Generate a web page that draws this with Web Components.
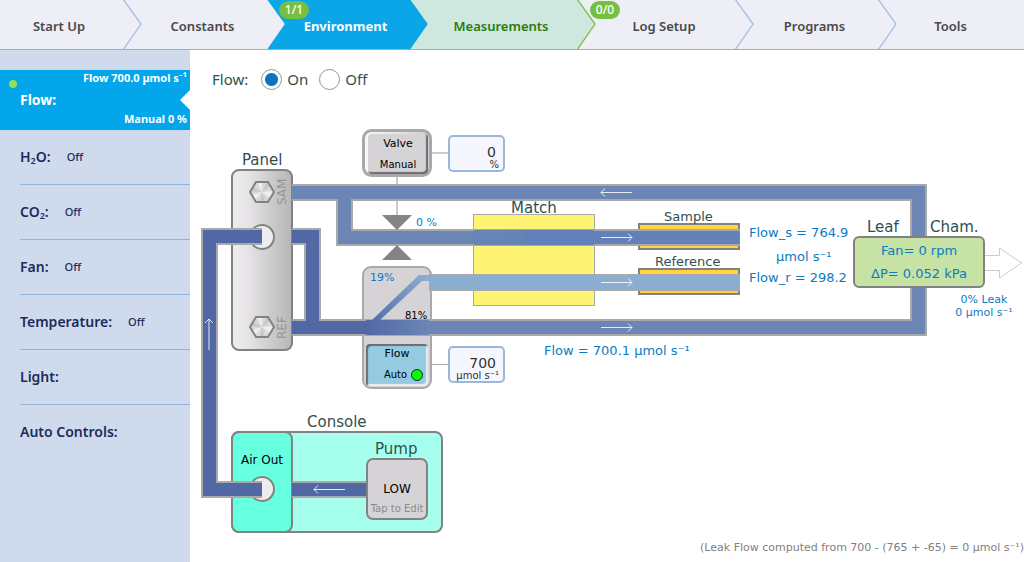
<!DOCTYPE html>
<html lang="en">
<head>
<meta charset="utf-8">
<title>Environment – Flow</title>
<style>
  html, body { margin: 0; min-height: 100%; background: #fff; }
  body { font-family: "Noto Sans", "Open Sans", sans-serif; }
</style>
</head>
<body>
<env-app></env-app>

<template id="t-env-app">
  <style>
    :host { display: flex; flex-direction: column; min-height: 100vh; }
    .body { display: flex; flex: 1; }
    .main { flex: 1; min-width: 0; display: flex; flex-direction: column; }
    .main > p { margin: auto 0 0; font: 11px/28px "DejaVu Sans", sans-serif; color: #808080; text-align: right; white-space: nowrap; }
  </style>
  <nav-bar>
    <nav-tab class="start">Start Up</nav-tab>
    <nav-tab before-active>Constants</nav-tab>
    <nav-tab badge="1/1" state="active">Environment</nav-tab>
    <nav-tab state="running">Measurements</nav-tab>
    <nav-tab badge="0/0">Log Setup</nav-tab>
    <nav-tab>Programs</nav-tab>
    <nav-tab class="end">Tools</nav-tab>
  </nav-bar>
  <div class="body">
    <side-bar>
      <side-active>
        <span slot="top">Flow 700.0 µmol s⁻¹</span>Flow:<span slot="bottom">Manual 0 %</span>
      </side-active>
      <side-item status="Off">H<sub>2</sub>O:</side-item>
      <side-item status="Off">CO<sub>2</sub>:</side-item>
      <side-item status="Off">Fan:</side-item>
      <side-item status="Off">Temperature:</side-item>
      <side-item>Light:</side-item>
      <side-item class="last">Auto Controls:</side-item>
    </side-bar>
    <main class="main">
      <flow-switch></flow-switch>
      <flow-diagram></flow-diagram>
      <p>(Leak Flow computed from 700 - (765 + -65) = 0 µmol s⁻¹)</p>
    </main>
  </div>
</template>

<template id="t-nav-bar">
  <style>
    :host { display: block; background: #eeeef6; border-bottom: 1px solid #93b1d2; }
    nav { display: grid; grid-template-columns: 124fr 143fr 143fr 168fr 158fr 143fr 145fr; height: 49px; overflow: hidden; }
    ::slotted(nav-tab) { --pad-left: 14px; }
    ::slotted(.start) { --pad-left: 0; --pad-right: 6px; }
    ::slotted(.end) { --pad-left: 0; --pad-right: 2px; }
  </style>
  <nav aria-label="Sections"><slot></slot></nav>
</template>

<template id="t-nav-tab">
  <style>
    :host { display: grid; position: relative; --fill: #eeeef6; --edge: #a3c0e2; --ink: #484848; --weight: 600; }
    :host([state="active"]) { --fill: #0aa6e8; --edge: #0aa6e8; --ink: #fff; --weight: 700; }
    :host([state="running"]) { --fill: #cfe8df; --edge: #76bf42; --ink: #2a7a10; }
    :host([before-active]) { --edge: #eeeef6; }
    :host(.end) svg { display: none; }
    button { border: 0; margin: 0; padding: 2px var(--pad-right, 0) 0 var(--pad-left, 0); background: var(--fill); color: var(--ink); font: var(--weight) 13px/20px "Noto Sans", sans-serif; cursor: pointer; }
    svg { position: absolute; left: 100%; top: 0; width: 20px; height: 49px; z-index: 1; overflow: visible; margin-left: -1px; }
    path { fill: var(--fill); stroke: var(--edge); stroke-width: 1.3; }
    .badge { position: absolute; z-index: 2; left: 12px; top: 1px; min-width: 30px; border-radius: 9px; background: #76bf42; color: #fff; font: 500 12px/18px "Noto Sans", sans-serif; text-align: center; }
    .badge:empty { display: none; }
  </style>
  <button type="button"><slot></slot></button>
  <svg aria-hidden="true"><path d="M0 -1L18 24L0 50"/></svg>
  <span class="badge"></span>
</template>

<template id="t-side-bar">
  <style>
    :host { display: block; flex: 0 0 190px; background: #cfdbed; }
    nav { padding-top: 20px; }
    ::slotted(.last) { --line: transparent; }
  </style>
  <nav aria-label="Controls"><slot></slot></nav>
</template>

<template id="t-side-active">
  <style>
    :host { display: block; position: relative; }
    button { display: grid; grid-template-rows: 16px 1fr 20px; width: 100%; height: 60px; border: 0; padding: 0 3px 0 20px; background: #03a6ea; color: #fff; font: 700 14px/20px "Noto Sans", sans-serif; text-align: left; }
    .main { align-self: center; padding-top: 4px; }
    .note { font-size: 11px; line-height: 16px; text-align: right; }
    .note:last-child { line-height: 18px; }
    i { position: absolute; left: 9px; top: 10px; width: 8px; height: 8px; border-radius: 50%; background: #92e052; }
    svg { position: absolute; right: 0; top: 20px; }
  </style>
  <button type="button" aria-current="true">
    <span class="note"><slot name="top"></slot></span>
    <span class="main"><slot></slot></span>
    <span class="note"><slot name="bottom"></slot></span>
  </button>
  <i></i>
  <svg width="10" height="20" aria-hidden="true"><path d="M10 0L0 10L10 20Z" fill="#fff"/></svg>
</template>

<template id="t-side-item">
  <style>
    :host { display: block; margin-left: 20px; border-bottom: 1px solid var(--line, #93b3d8); }
    button { display: flex; align-items: center; gap: 16px; width: 100%; height: 54px; border: 0; padding: 0; background: none; color: #1b2c5c; font: 600 14px/20px "Noto Sans", sans-serif; text-align: left; }
    .status { font-size: 11px; font-weight: 500; }
    ::slotted(sub) { font-size: 9px; line-height: 0; vertical-align: -2px; }
  </style>
  <button type="button"><span><slot></slot></span><span class="status"></span></button>
</template>

<template id="t-flow-switch">
  <style>
    :host { display: block; color: #2f4f4f; font-size: 15px; line-height: 20px; }
    fieldset { display: flex; align-items: center; height: 60px; box-sizing: border-box; margin: 0; padding: 0 22px 2px; border: 0; }
    .name { margin-right: 13px; }
    label { display: flex; align-items: center; gap: 5px; margin-right: 11px; }
    input { appearance: none; width: 21px; height: 21px; margin: 0; border: 1px solid #8b9a8b; border-radius: 50%; background: #fff; }
    input:checked { background: radial-gradient(circle, #0a76be 6px, #fff 7px); }
  </style>
  <fieldset>
    <span class="name" id="name">Flow:</span>
    <label><input type="radio" name="flow" checked>On</label>
    <label><input type="radio" name="flow">Off</label>
  </fieldset>
</template>

<template id="t-flow-field">
  <style>
    :host { display: block; box-sizing: border-box; border: 2px solid #9ab8d9; border-radius: 5px; background: #f5f6fe; color: #333; font-family: "DejaVu Sans", sans-serif; }
    label { display: flex; flex-direction: column; padding: 7px 4px 0 0; text-align: right; }
    input { width: 100%; box-sizing: border-box; border: 0; margin: 0; padding: 0 3px 0 0; background: none; color: inherit; font: 14px/16px "DejaVu Sans", sans-serif; height: 16px; text-align: right; }
    span { font-size: 10px; line-height: 10px; white-space: nowrap; }
  </style>
  <label><input type="text"><span><slot></slot></span></label>
</template>

<template id="t-flow-button">
  <style>
    :host { display: block; }
    button { display: flex; flex-direction: column; justify-content: space-between; align-items: center; width: 100%; height: 100%; box-sizing: border-box; padding: 3px 0; border: 0; border-radius: 4px; background: #d5d3d6; box-shadow: inset -2px -2px 1px #6e6c70; color: #000; font: 11px/14px "DejaVu Sans", sans-serif; }
    :host([lit]) button { background: #94cbe0; box-shadow: inset 2px 2px 1px #6e6c70, inset -2px -2px 1px #e8f0f4; }
    .mode { display: flex; align-items: center; gap: 4px; font-size: 10px; line-height: 12px; }
    i { display: none; }
    :host([lit]) i { display: block; width: 10px; height: 10px; border: 1px solid #222; border-radius: 50%; background: #0f0; }
    :host([lit]) .mode { padding-left: 13px; padding-bottom: 2px; }
  </style>
  <button type="button"><slot></slot><span class="mode"><slot name="mode"></slot><i></i></span></button>
</template>

<template id="t-pump-button">
  <style>
    :host { display: block; }
    button { display: flex; flex-direction: column; align-items: center; width: 100%; height: 100%; box-sizing: border-box; padding: 21px 0 0; border: 2px solid #828282; border-radius: 7px; background: #d5d3d6; color: #000; font: 12px/16px "DejaVu Sans", sans-serif; }
    ::slotted(small) { font-size: 10px; line-height: 12px; color: #8a8a8a; white-space: nowrap; margin-top: 6px; }
  </style>
  <button type="button"><span><slot></slot></span><slot name="hint"></slot></button>
</template>

<template id="t-flow-diagram">
  <style>
    :host { display: block; position: relative; height: 424px; overflow: hidden; }
    svg { display: block; width: 834px; height: 424px; font-family: "DejaVu Sans", sans-serif; fill: #2f4f4f; }
    .node { position: absolute; }
    .valve { left: 178px; top: 24px; width: 60px; height: 40px; }
    .valve-set { left: 258px; top: 25px; width: 57px; height: 37px; }
    .flow { left: 176px; top: 234px; width: 62px; height: 42px; }
    .flow-set { left: 258px; top: 236px; width: 57px; height: 37px; }
    .pump { left: 176px; top: 348px; width: 62px; height: 62px; }
    .h { font-size: 15px; }
    .m { font-size: 13px; }
    .s { font-size: 11px; }
    .blue { fill: #0a7bc2; }
    .pipe { fill: none; stroke-width: 17; stroke: #a9a9a9; }
    .core { fill: none; stroke-width: 13; stroke: #6b86b5; }
    .dark { stroke: #5268a5; }
    .light { stroke: #8badd0; }
    .box { stroke: #828282; stroke-width: 2; }
    .arrow { fill: none; stroke: #fff; stroke-opacity: .85; }
    .wire { stroke: #c8cdc8; stroke-width: 2; }
  </style>
  <svg viewBox="190 110 834 424" role="img" aria-label="Gas flow diagram">
    <defs>
      <linearGradient id="metal"><stop offset="0" stop-color="#f1edf1"/><stop offset=".3" stop-color="#e4e2e4"/><stop offset="1" stop-color="#b6b6b6"/></linearGradient>
      <linearGradient id="mix" gradientUnits="userSpaceOnUse" x1="366" x2="429" y1="0" y2="0"><stop offset="0" stop-color="#5268a5"/><stop offset="1" stop-color="#6b86b5"/></linearGradient>
      <linearGradient id="branch" gradientUnits="userSpaceOnUse" x1="374" y1="320" x2="426" y2="278"><stop offset="0" stop-color="#5470ab"/><stop offset="1" stop-color="#8badd0"/></linearGradient>
      <linearGradient id="rim"><stop offset="0" stop-color="#fafafa"/><stop offset="1" stop-color="#d0ced0"/></linearGradient>
      <g id="bolt">
        <path d="M-12 0L-6 -10H6L12 0L6 10H-6Z" fill="#d9d9d9"/>
        <path d="M0 0L-5 -10H0ZM0 0L11 -1L8 6ZM0 0L-10 3L-7 8Z" fill="#eee"/>
        <path d="M0 0L5 -10L8 -6ZM0 0L3 10H-2ZM0 0L-11 -1L-9 -5Z" fill="#c6c6c6"/>
        <path d="M-12 0L-6 -10H6L12 0L6 10H-6Z" fill="none" stroke="#828282" stroke-width="2"/>
      </g>
    </defs>

    <rect class="box" x="232" y="170" width="60" height="180" rx="7" fill="url(#metal)"/>
    <use href="#bolt" x="262" y="192"/>
    <use href="#bolt" x="262" y="327"/>
    <circle class="box" cx="262" cy="237" r="12" fill="#ededed"/>
    <rect class="box" x="232" y="432" width="210" height="100" rx="7" fill="#a6ffec"/>
    <rect class="box" x="232" y="432" width="60" height="100" rx="7" fill="#66ffdf"/>
    <circle class="box" cx="262" cy="489" r="12" fill="#ededed"/>
    <rect x="363" y="267" width="68" height="121" rx="8" fill="#d5d3d6" stroke="#a9a9a9" stroke-width="2"/>
    <rect x="363.5" y="130.5" width="67" height="45" rx="8" fill="url(#rim)" stroke="#a9a9a9" stroke-width="3"/>
    <path class="wire" d="M397 177V215M432 153H448"/>
    <path d="M430 364.5H448" stroke="#aaa"/>

    <rect x="473.5" y="214.5" width="121" height="91" fill="#fff373" stroke="#a9a9a9"/>
    <rect class="box" x="639" y="224" width="100" height="25" fill="#ffd440"/>
    <rect class="box" x="639" y="269" width="100" height="25" fill="#ffd440"/>

    <path class="pipe" d="M292 192.5H918.5V327.5H292M344.5 192.5V237.5H740M429 282.5H740M292 489.5H367"/>
    <path class="pipe" d="M262 236.5H209.5V489.5H262"/>
    <path class="pipe" d="M292 236.5H312.5V327"/>
    <path class="core" d="M292 192.5H918.5V327.5H366M344.5 192.5V237.5H740"/>
    <path class="core light" d="M429 282.5H740"/>
    <path class="core dark" d="M262 236.5H209.5V489.5H262M292 489.5H367M292 236.5H312.5V327.5M292 327.5H366"/>
    <rect x="366" y="320" width="63" height="15" fill="url(#mix)"/>
    <rect x="474" y="230" width="120" height="15" fill="#6380b8"/>
    <rect x="474" y="230" width="36" height="15" fill="#6884b5"/>
    <rect x="510" y="230" width="14" height="15" fill="#6485b2"/>
    <rect x="594" y="231" width="145" height="13" fill="#6380b8"/>
    <rect x="474" y="275" width="120" height="15" fill="#8badd0"/>
    <path d="M372 320L419 275H430V281H422L380 320Z" fill="url(#branch)"/>
    <path d="M382 215H412L397 230ZM382 260H412L397 245Z" fill="#858386"/>

    <path class="arrow" d="M632 192.5H601M605 188.5L601 192.5L605 196.5M601 237.5H632M628 233.5L632 237.5L628 241.5M601 282.5H632M628 278.5L632 282.5L628 286.5M601 327.5H632M628 323.5L632 327.5L628 331.5M345 489.5H314M318 485.5L314 489.5L318 493.5M209 350V319M205 323L209 319L213 323"/>

    <rect class="box" x="854" y="237" width="130" height="50" rx="5" fill="#c6e2a5"/>
    <path d="M985 255.5H999.5V248L1021.5 263L999.5 278V270.5H985" fill="#fff" stroke="#ccc"/>

    <text class="h" x="242" y="165">Panel</text>
    <text class="h" x="511" y="213">Match</text>
    <text class="m" x="664" y="221">Sample</text>
    <text class="m" x="655" y="266">Reference</text>
    <text class="h" x="867" y="232">Leaf</text>
    <text class="h" x="930" y="232">Cham.</text>
    <text class="h" x="307" y="427">Console</text>
    <text class="h" x="375" y="454">Pump</text>
    <text x="241" y="464" font-size="12" fill="#000">Air Out</text>
    <text x="405" y="319" font-size="10" fill="#000">81%</text>
    <text class="s blue" x="370" y="281">19%</text>
    <text class="s blue" x="416" y="226">0 %</text>
    <text class="m blue" x="544" y="355">Flow = 700.1 µmol s⁻¹</text>
    <text class="m blue" x="749" y="237">Flow_s = 764.9</text>
    <text class="m blue" x="776" y="261">µmol s⁻¹</text>
    <text class="m blue" x="749" y="282">Flow_r = 298.2</text>
    <text class="m blue" x="919" y="255" text-anchor="middle">Fan= 0 rpm</text>
    <text class="m blue" x="919" y="278" text-anchor="middle">ΔP= 0.052 kPa</text>
    <text class="s blue" x="984" y="303" text-anchor="middle">0% Leak</text>
    <text class="s blue" x="984" y="316" text-anchor="middle">0 µmol s⁻¹</text>
    <text font-size="12" fill="#959595" transform="translate(286 205) rotate(-90)">SAM</text>
    <text font-size="12" fill="#959595" transform="translate(286 339) rotate(-90)">REF</text>
  </svg>
  <flow-button class="node valve">Valve<span slot="mode">Manual</span></flow-button>
  <flow-field class="node valve-set" value="0" name="Valve position">%</flow-field>
  <flow-button class="node flow" lit>Flow<span slot="mode">Auto</span></flow-button>
  <flow-field class="node flow-set" value="700" name="Flow setpoint">µmol s⁻¹</flow-field>
  <pump-button class="node pump">LOW<small slot="hint">Tap to Edit</small></pump-button>
</template>

<script>
  class Base extends HTMLElement {
    constructor() {
      super();
      const t = document.getElementById('t-' + this.localName);
      this.attachShadow({ mode: 'open' }).append(t.content.cloneNode(true));
    }
    find(s) { return this.shadowRoot.querySelector(s); }
  }
  class NavTab extends Base {
    connectedCallback() {
      this.find('.badge').textContent = this.getAttribute('badge') || '';
      if (this.getAttribute('state') === 'active') this.find('button').setAttribute('aria-current', 'page');
    }
  }
  class SideItem extends Base {
    connectedCallback() { this.find('.status').textContent = this.getAttribute('status') || ''; }
  }
  class FlowField extends Base {
    connectedCallback() {
      const input = this.find('input');
      input.value = this.getAttribute('value');
      input.setAttribute('aria-label', this.getAttribute('name'));
    }
  }
  class FlowSwitch extends Base {
    connectedCallback() { this.find('fieldset').setAttribute('aria-labelledby', 'name'); }
  }
  customElements.define('nav-tab', NavTab);
  customElements.define('nav-bar', class extends Base {});
  customElements.define('side-item', SideItem);
  customElements.define('side-active', class extends Base {});
  customElements.define('side-bar', class extends Base {});
  customElements.define('flow-switch', FlowSwitch);
  customElements.define('flow-field', FlowField);
  customElements.define('flow-button', class extends Base {});
  customElements.define('pump-button', class extends Base {});
  customElements.define('flow-diagram', class extends Base {});
  customElements.define('env-app', class extends Base {});
</script>
</body>
</html>
